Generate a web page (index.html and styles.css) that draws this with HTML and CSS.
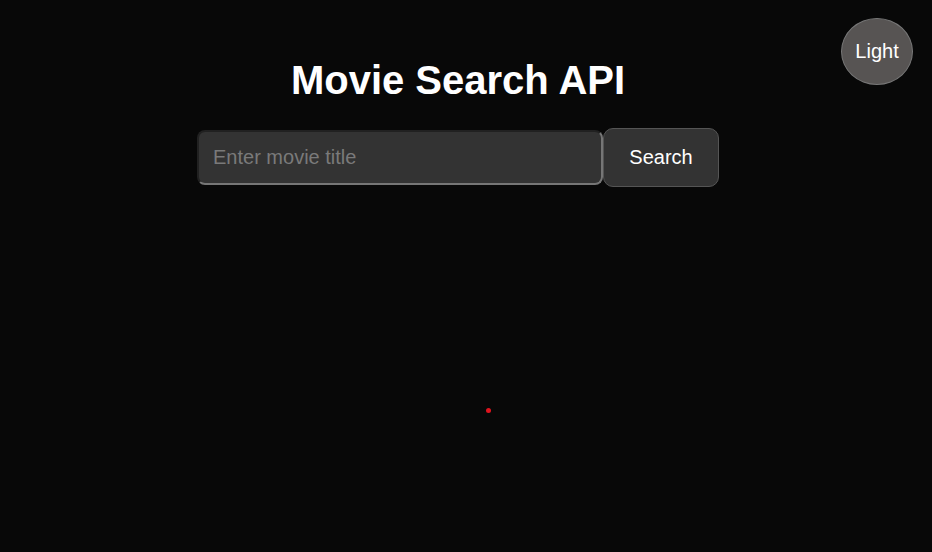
FILE: index.html
```html
<!DOCTYPE html>
<html lang="en">
<head>
<meta charset="utf-8">
<title>Movie Search API</title>
<link rel="stylesheet" href="styles.css">
</head>
<body>
<button class="theme-toggle">Light</button>
<main class="app">
  <h1 class="title">Movie Search API</h1>
  <form class="search">
    <input class="search-input" type="text" placeholder="Enter movie title">
    <button class="search-btn" type="button">Search</button>
  </form>
  <div class="results">
    <span class="dot"></span>
  </div>
</main>
</body>
</html>
```
FILE: styles.css
```css
html, body {
  margin: 0;
  height: 100%;
}
body {
  background: #080808;
  color: #fff;
  font-family: "Liberation Sans", Arial, sans-serif;
  position: relative;
}
.theme-toggle {
  position: absolute;
  top: 18px;
  right: 19px;
  width: 72px;
  height: 67px;
  border-radius: 50%;
  background: #575453;
  border: 1px solid #777;
  color: #fff;
  font-family: inherit;
  font-size: 20px;
  padding: 0;
}
.app {
  display: flex;
  flex-direction: column;
  align-items: center;
  padding: 0 16px 0 0;
}
.title {
  margin: 57px 0 0;
  font-size: 40px;
  line-height: 46px;
  font-weight: bold;
}
.search {
  display: flex;
  align-items: center;
  margin-top: 25px;
}
.search-input {
  box-sizing: border-box;
  width: 406px;
  height: 55px;
  background: #333;
  border: 2px inset #767676;
  border-radius: 8px;
  color: #fff;
  font-family: inherit;
  font-size: 20px;
  padding: 0 14px;
  margin: 0;
}
.search-input::placeholder {
  color: #7a7a7a;
}
.search-btn {
  box-sizing: border-box;
  width: 116px;
  height: 59px;
  margin-left: 0;
  background: #333;
  border: 1px solid #555;
  border-radius: 10px;
  color: #fff;
  font-family: inherit;
  font-size: 20px;
}
.results {
  position: relative;
  width: 100%;
  height: 300px;
}
.dot {
  position: absolute;
  left: 486px;
  top: 221px;
  width: 5px;
  height: 5px;
  border-radius: 50%;
  background: #e0141e;
}
```
